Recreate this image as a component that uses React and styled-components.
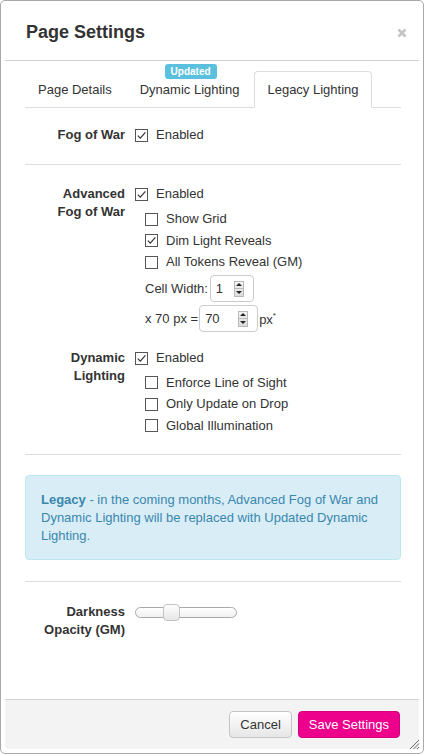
import styled, { createGlobalStyle } from "styled-components";

const GlobalStyle = createGlobalStyle`
  html, body, #root {
    height: 100%;
  }
  body {
    margin: 0;
    background: #fff;
    color: #333;
    font-family: "Liberation Sans", Arial, sans-serif;
    font-size: 13px;
  }
  * {
    box-sizing: border-box;
  }
`;

const Dialog = styled.div`
  position: relative;
  height: 100vh;
  display: flex;
  flex-direction: column;
  padding: 4px;
  border: 1px solid #a9a9a9;
  border-radius: 5px;
  background: #fff;
`;

const Header = styled.div`
  height: 56px;
  flex-shrink: 0;
  display: flex;
  align-items: center;
  justify-content: space-between;
  padding: 0 12px 0 21px;
  border-bottom: 1px solid #cfcfcf;
`;

const Title = styled.h1`
  margin: 0;
  font-size: 18px;
  font-weight: bold;
  color: #333;
`;

const Body = styled.div`
  flex: 1;
  padding: 0 18px 0 20px;
`;

const Tabs = styled.div`
  display: flex;
  margin-top: 10px;
  border-bottom: 1px solid #ddd;
`;

const Tab = styled.div`
  position: relative;
  height: 37px;
  margin-right: 2px;
  margin-bottom: -1px;
  padding: 0 12px;
  display: flex;
  align-items: center;
  border: 1px solid ${(p) => (p.$active ? "#ddd" : "transparent")};
  border-bottom-color: ${(p) => (p.$active ? "#fff" : "transparent")};
  border-radius: 4px 4px 0 0;
  background: ${(p) => (p.$active ? "#fff" : "transparent")};
  color: #333;
  white-space: nowrap;
`;

const Badge = styled.span`
  position: absolute;
  top: -8px;
  left: 50%;
  transform: translateX(-48%);
  height: 15px;
  padding: 0 6px;
  border-radius: 3px;
  background: #5bc0de;
  color: #fff;
  font-size: 10px;
  font-weight: bold;
  line-height: 15px;
`;

const FormRow = styled.div`
  display: grid;
  grid-template-columns: 100px 1fr;
  column-gap: 10px;
  margin-top: ${(p) => p.$top || 0}px;
`;

const Label = styled.div`
  text-align: right;
  font-weight: bold;
  line-height: 18px;
  color: #333;
`;

const Controls = styled.div`
  display: flex;
  flex-direction: column;
`;

const CheckRow = styled.div`
  display: flex;
  align-items: center;
  height: ${(p) => (p.$sub ? "21.5px" : "18px")};
  padding-left: ${(p) => (p.$sub ? 10 : 0)}px;
  line-height: 18px;
`;

const Box = styled.span`
  width: 13px;
  height: 13px;
  margin-right: 8px;
  flex-shrink: 0;
  border: 1px solid #555;
  background: #fff;
  display: flex;
  align-items: center;
  justify-content: center;
`;

const SubList = styled.div`
  padding-top: ${(p) => p.$top}px;
`;

const InputRow = styled.div`
  display: flex;
  align-items: center;
  height: 27px;
  margin-top: ${(p) => p.$top}px;
  padding-left: 10px;
  white-space: nowrap;
`;

const NumberBox = styled.div`
  width: ${(p) => p.$width}px;
  height: 27px;
  margin-left: ${(p) => p.$gap}px;
  padding: 0 9px 0 5px;
  display: flex;
  align-items: center;
  justify-content: space-between;
  border: 1px solid #ccc;
  border-radius: 4px;
  background: #fff;
`;

const Spinner = styled.span`
  width: 10px;
  height: 16px;
  display: flex;
  flex-direction: column;
  border: 1px solid #b9b9b9;
  background: linear-gradient(#f4f4f4, #dcdcdc);
`;

const SpinHalf = styled.span`
  flex: 1;
  display: flex;
  align-items: center;
  justify-content: center;
  border-top: ${(p) => (p.$down ? "1px solid #b9b9b9" : "none")};
`;

const Arrow = styled.span`
  width: 0;
  height: 0;
  border-left: 3px solid transparent;
  border-right: 3px solid transparent;
  ${(p) =>
    p.$down ? "border-top: 3px solid #222;" : "border-bottom: 3px solid #222;"}
`;

const Unit = styled.span`
  margin-left: 1px;
`;

const Star = styled.sup`
  font-size: 8px;
  vertical-align: 6px;
`;

const Divider = styled.hr`
  height: 1px;
  margin: ${(p) => p.$top}px 0 ${(p) => p.$bottom}px;
  border: 0;
  background: #ddd;
`;

const Alert = styled.div`
  padding: 15px 15px 14px;
  border: 1px solid #bce8f1;
  border-radius: 4px;
  background: #d9edf7;
  color: #3a87ad;
  line-height: 18px;

  strong {
    font-weight: bold;
  }
`;

const Track = styled.div`
  position: relative;
  width: 102px;
  height: 11px;
  margin-top: 4px;
  border: 1px solid #aaa;
  border-radius: 6px;
  background: linear-gradient(#fff, #f1f1f1);
`;

const Handle = styled.span`
  position: absolute;
  top: -4px;
  width: 17px;
  height: 17px;
  border: 1px solid #c3c3c3;
  border-radius: 4px;
  background: linear-gradient(#fefefe, #e6e6e6);
`;

const Footer = styled.div`
  height: 50px;
  flex-shrink: 0;
  display: flex;
  align-items: center;
  justify-content: flex-end;
  gap: 6px;
  padding-right: 19px;
  border-top: 1px solid #d3d3d3;
  border-radius: 0 0 4px 4px;
  background: #f3f3f3;
`;

const Button = styled.button`
  height: 27px;
  padding: 0 10px;
  border-radius: 4px;
  font-family: inherit;
  font-size: 13px;
  cursor: pointer;
  border: 1px solid ${(p) => (p.$primary ? "#d6007f" : "#c4c4c4")};
  background: ${(p) =>
    p.$primary ? "#ec008c" : "linear-gradient(#fff, #e6e6e6)"};
  color: ${(p) => (p.$primary ? "#fff" : "#333")};
`;

const Grip = styled.svg`
  position: absolute;
  right: 3px;
  bottom: 3px;
`;

function Checkbox({ checked, sub, children }) {
  return (
    <CheckRow $sub={sub}>
      <Box>
        {checked && (
          <svg width="11" height="11" viewBox="0 0 11 11">
            <polyline
              points="1.8,5.6 4.3,8.2 9.4,2.4"
              fill="none"
              stroke="#333"
              strokeWidth="1.2"
            />
          </svg>
        )}
      </Box>
      {children}
    </CheckRow>
  );
}

function NumberInput({ value, width, gap }) {
  return (
    <NumberBox $width={width} $gap={gap}>
      <span>{value}</span>
      <Spinner>
        <SpinHalf>
          <Arrow />
        </SpinHalf>
        <SpinHalf $down>
          <Arrow $down />
        </SpinHalf>
      </Spinner>
    </NumberBox>
  );
}

export default function App() {
  const darkness = 27;

  return (
    <>
      <GlobalStyle />
      <Dialog>
        <Header>
          <Title>Page Settings</Title>
          <svg width="10" height="10" viewBox="0 0 10 10">
            <path
              d="M1.5 1.5 L8.5 8.5 M8.5 1.5 L1.5 8.5"
              stroke="#c4c4c4"
              strokeWidth="2.6"
            />
          </svg>
        </Header>

        <Body>
          <Tabs>
            <Tab>Page Details</Tab>
            <Tab>
              Dynamic Lighting
              <Badge>Updated</Badge>
            </Tab>
            <Tab $active>Legacy Lighting</Tab>
          </Tabs>

          <FormRow $top={18}>
            <Label>Fog of War</Label>
            <Controls>
              <Checkbox checked>Enabled</Checkbox>
            </Controls>
          </FormRow>

          <Divider $top={20} $bottom={20} />

          <FormRow>
            <Label>
              Advanced
              <br />
              Fog of War
            </Label>
            <Controls>
              <Checkbox checked>Enabled</Checkbox>
              <SubList $top={5.5}>
                <Checkbox sub>Show Grid</Checkbox>
                <Checkbox sub checked>
                  Dim Light Reveals
                </Checkbox>
                <Checkbox sub>All Tokens Reveal (GM)</Checkbox>
              </SubList>
              <InputRow $top={2}>
                Cell Width:
                <NumberInput value="1" width={44} gap={2} />
              </InputRow>
              <InputRow $top={3}>
                x 70 px =
                <NumberInput value="70" width={59} gap={1} />
                <Unit>
                  px<Star>*</Star>
                </Unit>
              </InputRow>
            </Controls>
          </FormRow>

          <FormRow $top={17}>
            <Label>
              Dynamic
              <br />
              Lighting
            </Label>
            <Controls>
              <Checkbox checked>Enabled</Checkbox>
              <SubList $top={5}>
                <Checkbox sub>Enforce Line of Sight</Checkbox>
                <Checkbox sub>Only Update on Drop</Checkbox>
                <Checkbox sub>Global Illumination</Checkbox>
              </SubList>
            </Controls>
          </FormRow>

          <Divider $top={17.5} $bottom={20} />

          <Alert>
            <strong>Legacy</strong> - in the coming months, Advanced Fog of War
            and Dynamic Lighting will be replaced with Updated Dynamic Lighting.
          </Alert>

          <Divider $top={21} $bottom={21} />

          <FormRow>
            <Label>
              Darkness
              <br />
              Opacity (GM)
            </Label>
            <Controls>
              <Track>
                <Handle style={{ left: `${darkness}px` }} />
              </Track>
            </Controls>
          </FormRow>
        </Body>

        <Footer>
          <Button>Cancel</Button>
          <Button $primary>Save Settings</Button>
        </Footer>

        <Grip width="11" height="11" viewBox="0 0 11 11">
          <path
            d="M10 1 L1 10 M10 4.5 L4.5 10 M10 8 L8 10"
            stroke="#666"
            strokeWidth="1"
          />
        </Grip>
      </Dialog>
    </>
  );
}
